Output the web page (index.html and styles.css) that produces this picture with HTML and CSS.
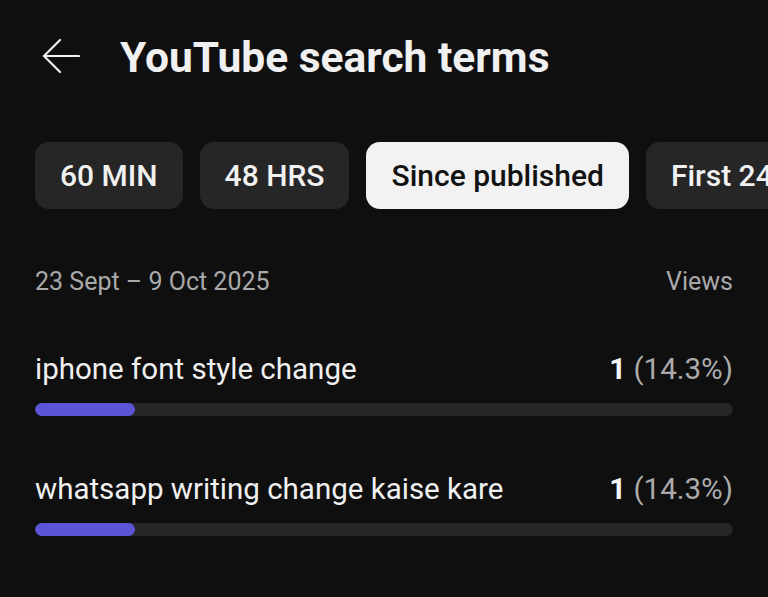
FILE: index.html
```html
<!DOCTYPE html>
<html>
<head>
<meta charset="utf-8">
<link rel="stylesheet" href="styles.css">
</head>
<body>
<div class="screen">
  <header class="topbar">
    <svg class="back" width="38" height="36" viewBox="0 0 38 36" fill="none" stroke="#f2f2f2" stroke-width="2.2" stroke-linecap="round" stroke-linejoin="round">
      <path d="M37 18H2"/>
      <path d="M18 2L2 18L18 34"/>
    </svg>
    <h1 class="title">YouTube search terms</h1>
  </header>
  <div class="chips">
    <div class="chip">60 MIN</div>
    <div class="chip">48 HRS</div>
    <div class="chip active">Since published</div>
    <div class="chip">First 24 hours</div>
  </div>
  <div class="content">
    <div class="meta">
      <span>23 Sept – 9 Oct 2025</span>
      <span>Views</span>
    </div>
    <div class="row">
      <div class="row-head">
        <span class="term">iphone font style change</span>
        <span class="val"><b>1</b> (14.3%)</span>
      </div>
      <div class="track"><div class="fill" style="width:14.3%"></div></div>
    </div>
    <div class="row">
      <div class="row-head">
        <span class="term">whatsapp writing change kaise kare</span>
        <span class="val"><b>1</b> (14.3%)</span>
      </div>
      <div class="track"><div class="fill" style="width:14.3%"></div></div>
    </div>
  </div>
</div>
</body>
</html>
```
FILE: styles.css
```css
html, body {
  margin: 0;
  padding: 0;
  background: #0f0f10;
}
body {
  font-family: Roboto, "Liberation Sans", sans-serif;
  color: #f1f1f1;
  width: 768px;
  height: 597px;
  overflow: hidden;
}
.screen {
  display: flex;
  flex-direction: column;
}
.topbar {
  display: flex;
  align-items: center;
  height: 114px;
  padding-left: 42px;
}
.back {
  flex: none;
  margin-top: -2px;
}
.title {
  margin: 0 0 0 40px;
  font-size: 42.5px;
  font-weight: 700;
  color: #f0f0f0;
  letter-spacing: 0;
}
.chips {
  display: flex;
  gap: 17px;
  padding: 28px 0 0 35px;
  white-space: nowrap;
  overflow: hidden;
}
.chip {
  flex: none;
  height: 67px;
  box-sizing: border-box;
  padding: 0 25px 0 25px;
  display: flex;
  align-items: center;
  background: #262626;
  border-radius: 14px;
  font-size: 30px;
  font-weight: 500;
  color: #f1f1f1;
}
.chip.active {
  background: #f2f2f2;
  color: #121212;
}
.content {
  padding: 0 35px;
}
.meta {
  display: flex;
  justify-content: space-between;
  align-items: center;
  margin-top: 57px;
  height: 30px;
  font-size: 25px;
  color: #a9a9a9;
}
.row {
  margin-top: 56px;
}
.row + .row {
  margin-top: 56px;
}
.row-head {
  display: flex;
  justify-content: space-between;
  align-items: center;
  height: 34px;
  font-size: 29.5px;
}
.term {
  color: #f0f0f0;
}
.val {
  color: #ababab;
}
.val b {
  color: #f5f5f5;
  font-weight: 700;
}
.track {
  margin-top: 17px;
  height: 13px;
  border-radius: 6.5px;
  background: #262626;
  overflow: hidden;
}
.fill {
  height: 100%;
  border-radius: 6.5px;
  background: #5b54d6;
}
```
